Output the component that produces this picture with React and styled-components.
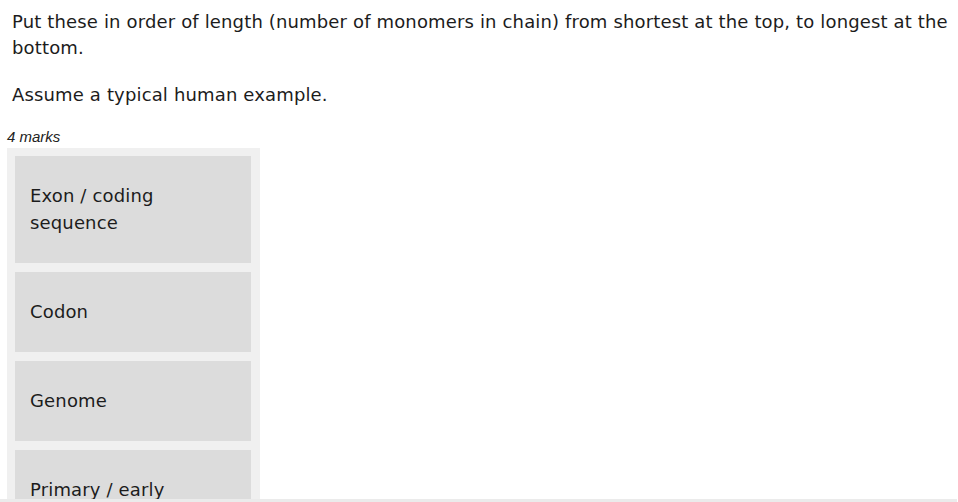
import React from "react";
import styled, { createGlobalStyle } from "styled-components";

const items = ["Exon / coding sequence", "Codon", "Genome", "Primary / early"];

const App = () => {
  return (
    <Page>
      <GlobalStyle />
      <Question>
        <p>
          Put these in order of length (number of monomers in chain) from
          shortest at the top, to longest at the bottom.
        </p>
        <p>Assume a typical human example.</p>
      </Question>
      <Marks>4 marks</Marks>
      <SortList>
        {items.map((item) => (
          <SortItem key={item}>{item}</SortItem>
        ))}
      </SortList>
      <ScrollStrip />
    </Page>
  );
};

const GlobalStyle = createGlobalStyle`
  html, body {
    margin: 0;
    background: #fff;
    overflow: hidden;
  }
`;

const Page = styled.div`
  height: 502px;
  overflow: hidden;
  padding: 9px 0 0 7px;
  box-sizing: border-box;
`;

const Question = styled.div`
  padding-left: 5px;
  font-family: "DejaVu Sans", Verdana, sans-serif;
  font-size: 18px;
  letter-spacing: 0.15px;
  line-height: 26px;
  color: #1c1c1c;

  p {
    margin: 0 0 21px;
  }
  p:last-child {
    margin-bottom: 0;
  }
`;

const Marks = styled.div`
  margin-top: 20px;
  font-family: "Liberation Sans", Arial, sans-serif;
  font-style: italic;
  font-size: 15px;
  line-height: 18px;
  color: #222;
`;

const SortList = styled.div`
  margin-top: 2px;
  width: 236px;
  padding: 8px 9px 8px 8px;
  background: #f0f0f0;
  display: flex;
  flex-direction: column;
  gap: 9px;
`;

const SortItem = styled.div`
  background: #dcdcdc;
  padding: 26px 15px 27px;
  font-family: "DejaVu Sans", Verdana, sans-serif;
  font-size: 18px;
  letter-spacing: 0.15px;
  line-height: 27px;
  color: #1c1c1c;
`;

const ScrollStrip = styled.div`
  position: fixed;
  left: 0;
  bottom: 0;
  width: 957px;
  height: 3px;
  background: #ebebeb;
`;

export default App;
